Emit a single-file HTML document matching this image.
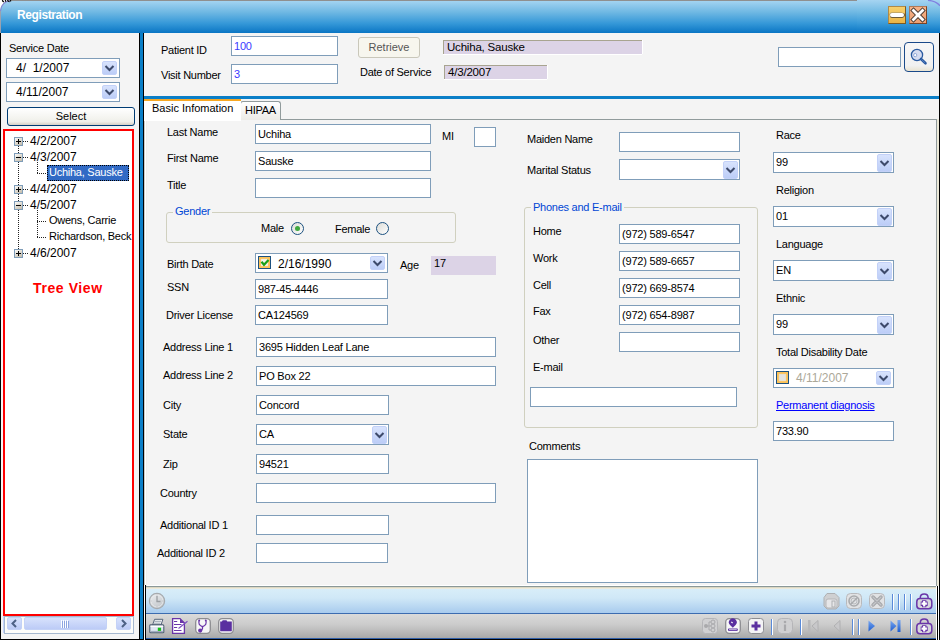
<!DOCTYPE html>
<html><head><meta charset="utf-8">
<style>
*{box-sizing:border-box}
html,body{margin:0;padding:0}
body{width:940px;height:640px;overflow:hidden;position:relative;background:#f4f4f4;font-family:"Liberation Sans",sans-serif;font-size:11px;color:#000}
.a{position:absolute}
.l{position:absolute;line-height:13px;white-space:nowrap;letter-spacing:-0.25px}
.tr{font-size:12px;letter-spacing:0;margin-top:1px}
.tb{position:absolute;background:#fff;border:1px solid #7f9db9;line-height:13px;padding:3px 0 0 2px;white-space:nowrap;overflow:hidden;height:20px;letter-spacing:-0.2px}
.ro{position:absolute;background:#dcd3e6;line-height:13px;padding:0 0 0 3px;white-space:nowrap;border-top:1px solid #a8a490;border-left:1px solid #a8a490;box-shadow:0 1px 0 #fff,1px 0 0 #fff;letter-spacing:-0.2px}
.dd{position:absolute;right:1px;top:1px;width:15px;height:17px;border:1px solid #c3d1f8;border-radius:2px;background:linear-gradient(#d8e3fd,#bccdf7)}
.dd svg{position:absolute;left:1px;top:5px}
.dp{font-size:12px;letter-spacing:0;padding-top:3px}
.dp .dd{top:2px;right:2px;height:14px}
.dp .dd svg{top:3px}
.grp{position:absolute;border:1px solid #d0d0bf;border-radius:3px}
.leg{position:absolute;line-height:13px;white-space:nowrap;color:#0046d5;background:#f4f4f4;padding:0 2px;letter-spacing:-0.25px}
</style></head><body>
<!-- title bar -->
<div class="a" style="left:0;top:0;width:940px;height:33px;background:#fff"></div>
<div class="a" style="left:0;top:0;width:857px;height:1px;background:#8f8f8f"></div>
<div class="a" style="left:0;top:1px;width:940px;height:32px;border-radius:9px 0 0 0;background:linear-gradient(#a3d3f1,#6fb8e3 35%,#3598d8 70%,#0a76c4)"></div>
<div class="a" style="left:857px;top:0;width:83px;height:33px;background:linear-gradient(#a6d4f1,#73bbe4 35%,#3a9bd9 70%,#0a76c4)"></div>
<svg class="a" style="left:926px;top:0" width="14" height="8"><path d="M2 0.3 Q10 0.8 14 5.8" fill="none" stroke="#8080e0" stroke-width="1.2"/></svg>
<svg class="a" style="left:0;top:0" width="12" height="12"><path d="M0 0 H11 Q1 1 0 11 Z" fill="#fff"/><path d="M11 0.5 Q1.5 1.5 0.5 11" fill="none" stroke="#8a8ad0" stroke-width="1.2"/></svg>
<div class="l" style="left:17px;top:9px;font-weight:bold;font-size:12px;letter-spacing:-0.4px;color:#fff">Registration</div><div class="a" style="left:0;top:11px;width:1px;height:22px;background:#9aa2b0"></div><svg class="a" style="left:0;top:0" width="12" height="4"><path d="M2.5 0 Q2.5 1.6 4 1.6 M5.5 0 V1.8 M7.5 0 Q8 1.6 9.5 1.6 M10.5 0 V1.5" fill="none" stroke="#111" stroke-width="1.3"/></svg>
<!-- min / close -->
<div class="a" style="left:888px;top:6px;width:18px;height:18px;background:linear-gradient(#f7d06c,#ebb445);border:1px solid #7c5a22;border-top-color:#b08a48;border-left-color:#b08a48"></div>
<div class="a" style="left:890px;top:13px;width:14px;height:4px;background:#fff;border-radius:2px;box-shadow:0 1px 0 #6b5a3a,1px 0 0 #6b5a3a,-0.5px -0.5px 0 #9a8a6a"></div>
<div class="a" style="left:909px;top:6px;width:18px;height:18px;background:linear-gradient(#f6b288,#eda072);border:1px solid #7a4428;border-top-color:#b07a58;border-left-color:#b07a58"></div>
<svg class="a" style="left:910px;top:7px" width="16" height="16" viewBox="0 0 16 16"><path d="M3.5 3.5 L12.5 12.5 M12.5 3.5 L3.5 12.5" stroke="#4a3a30" stroke-width="4.6" stroke-linecap="square"/><path d="M3.5 3.5 L12.5 12.5 M12.5 3.5 L3.5 12.5" stroke="#fff" stroke-width="2.8" stroke-linecap="square"/></svg>

<!-- borders -->
<div class="a" style="left:0;top:33px;width:1px;height:607px;background:#000"></div>
<div class="a" style="left:939px;top:33px;width:1px;height:607px;background:#000"></div>

<!-- left panel -->
<div class="l" style="left:9px;top:42px">Service Date</div>
<div class="tb dp" style="left:6px;top:58px;width:114px;padding-left:9px">4/&nbsp; 1/2007<div class="dd"><svg width="11" height="7"><path d="M1.5 1 L5.5 5 L9.5 1" fill="none" stroke="#3d4a6b" stroke-width="2"/></svg></div></div>
<div class="tb dp" style="left:6px;top:82px;width:114px;padding-left:9px">4/11/2007<div class="dd"><svg width="11" height="7"><path d="M1.5 1 L5.5 5 L9.5 1" fill="none" stroke="#3d4a6b" stroke-width="2"/></svg></div></div>
<div class="a" style="left:7px;top:107px;width:128px;height:19px;border:1px solid #003c74;border-radius:3px;background:linear-gradient(#fff,#f0f0ea 80%,#d6d0c5);text-align:center;line-height:16px">Select</div>

<!-- tree -->
<div class="a" style="left:3px;top:129px;width:131px;height:487px;border:2px solid #f00;background:#fff"></div>
<div class="l tr" style="left:30px;top:134px">4/2/2007</div>
<div class="l tr" style="left:30px;top:150px">4/3/2007</div>
<div class="a" style="left:47px;top:165px;width:82px;height:16px;background:#316ac5;border:1px dotted #000"></div>
<div class="l" style="left:49px;top:166px;color:#fff">Uchiha, Sauske</div>
<div class="l tr" style="left:30px;top:182px">4/4/2007</div>
<div class="l tr" style="left:30px;top:198px">4/5/2007</div>
<div class="l" style="left:49px;top:214px">Owens, Carrie</div>
<div class="l" style="left:49px;top:230px">Richardson, Beck</div>
<div class="l tr" style="left:30px;top:246px">4/6/2007</div>
<div class="l" style="left:33px;top:282px;font-weight:bold;font-size:14px;letter-spacing:0.6px;color:#f00">Tree View</div>

<!-- h scrollbar -->
<div class="a" style="left:3px;top:616px;width:131px;height:17px;background:#f3f1ec;border:1px solid #c3d3fd"></div>

<!-- separator -->
<div class="a" style="left:139px;top:33px;width:5px;height:607px;background:#0b7fc7;border-left:1px solid #000;border-right:1px solid #000"></div>
<div class="a" style="left:144px;top:96px;width:795px;height:3px;background:#0b7fc7"></div>

<!-- header -->
<div class="l" style="left:161px;top:44px">Patient ID</div>
<div class="l" style="left:161px;top:69px">Visit Number</div>
<div class="tb" style="left:231px;top:36px;width:107px;color:#3a3aff">100</div>
<div class="tb" style="left:231px;top:64px;width:107px;color:#3a3aff">3</div>
<div class="a" style="left:358px;top:37px;width:62px;height:21px;border:1px solid #c9c7ba;border-radius:3px;background:#f7f6ee;color:#555;text-align:center;line-height:19px">Retrieve</div>
<div class="ro" style="left:443px;top:40px;width:199px;height:14px;font-size:11.5px">Uchiha, Sauske</div>
<div class="l" style="left:360px;top:66px">Date of Service</div>
<div class="ro" style="left:444px;top:65px;width:103px;height:14px;font-size:11.5px">4/3/2007</div>
<div class="tb" style="left:778px;top:47px;width:123px"></div>
<div class="a" style="left:904px;top:42px;width:30px;height:30px;border:1.5px solid #1a4a8a;border-radius:4px;background:linear-gradient(#f7f7f7,#f1f1f1 80%,#e9e3d2)"></div>

<!-- tabs -->
<div class="a" style="left:144px;top:119px;width:793px;height:468px;border:1px solid #919b9c;border-left-color:#c8ccc8;border-bottom-color:#8a9898;background:#f4f4f4;box-shadow:inset 1px 0 0 #fff,inset 2px 0 0 #f0f0ec,inset 0 -1px 0 #fff"></div><div class="a" style="left:937px;top:119px;width:2px;height:468px;background:#ece9d8"></div>
<div class="a" style="left:240px;top:101px;width:41px;height:19px;border:1px solid #919b9c;border-bottom:none;border-radius:3px 3px 0 0;background:linear-gradient(#fff,#ecebe6)"></div>
<div class="l" style="left:245px;top:104px">HIPAA</div>
<div class="a" style="left:144px;top:99px;width:97px;height:22px;background:#fff;border-top:2px solid #f7a824"></div>
<div class="l" style="left:152px;top:102px;letter-spacing:0">Basic Infomation</div>

<!-- col 1 -->
<div class="l" style="left:167px;top:126px">Last Name</div>
<div class="tb" style="left:255px;top:124px;width:176px">Uchiha</div>
<div class="l" style="left:442px;top:130px">MI</div>
<div class="tb" style="left:474px;top:127px;width:22px"></div>
<div class="l" style="left:167px;top:152px">First Name</div>
<div class="tb" style="left:255px;top:151px;width:176px">Sauske</div>
<div class="l" style="left:167px;top:179px">Title</div>
<div class="tb" style="left:255px;top:178px;width:176px"></div>

<div class="grp" style="left:166px;top:212px;width:290px;height:31px"></div>
<div class="leg" style="left:173px;top:205px">Gender</div>
<div class="l" style="left:261px;top:222px">Male</div>
<div class="a" style="left:291px;top:222px;width:13px;height:13px;border-radius:50%;border:1px solid #1c5180;background:linear-gradient(135deg,#dcdcd7,#fff)"></div>
<div class="a" style="left:295px;top:226px;width:5px;height:5px;border-radius:50%;background:#3fa83f"></div>
<div class="l" style="left:335px;top:223px">Female</div>
<div class="a" style="left:376px;top:222px;width:13px;height:13px;border-radius:50%;border:1px solid #1c5180;background:linear-gradient(135deg,#dcdcd7,#fff)"></div>

<div class="l" style="left:167px;top:258px">Birth Date</div>
<div class="tb dp" style="left:255px;top:253px;width:133px;padding-left:22px;padding-top:4px">2/16/1990<div class="a" style="left:2px;top:2px;width:13px;height:13px;border:1px solid #1c5180;background:#f2f2ee;box-shadow:inset 0 0 1px 2px #fbc25a"></div><svg class="a" style="left:4px;top:4px" width="10" height="10"><path d="M1.5 3.8 L4 6.8 L8.5 2" fill="none" stroke="#18a018" stroke-width="2.2"/></svg><div class="dd"><svg width="11" height="7"><path d="M1.5 1 L5.5 5 L9.5 1" fill="none" stroke="#3d4a6b" stroke-width="2"/></svg></div></div>
<div class="l" style="left:400px;top:259px">Age</div>
<div class="a" style="left:431px;top:256px;width:65px;height:19px;padding:1px 0 0 3px;line-height:13px;background:#dcd3e6">17</div>
<div class="l" style="left:167px;top:281px">SSN</div>
<div class="tb" style="left:255px;top:279px;width:133px">987-45-4446</div>
<div class="l" style="left:166px;top:309px">Driver License</div>
<div class="tb" style="left:255px;top:305px;width:133px">CA124569</div>
<div class="l" style="left:163px;top:341px">Address Line 1</div>
<div class="tb" style="left:256px;top:337px;width:240px">3695 Hidden Leaf Lane</div>
<div class="l" style="left:163px;top:369px">Address Line 2</div>
<div class="tb" style="left:256px;top:366px;width:240px">PO Box 22</div>
<div class="l" style="left:163px;top:399px">City</div>
<div class="tb" style="left:256px;top:395px;width:133px">Concord</div>
<div class="l" style="left:163px;top:428px">State</div>
<div class="tb" style="left:256px;top:424px;width:133px;height:21px">CA<div class="dd" style="height:18px"><svg width="11" height="7"><path d="M1.5 1 L5.5 5 L9.5 1" fill="none" stroke="#3d4a6b" stroke-width="2"/></svg></div></div>
<div class="l" style="left:163px;top:458px">Zip</div>
<div class="tb" style="left:256px;top:454px;width:133px">94521</div>
<div class="l" style="left:160px;top:487px">Country</div>
<div class="tb" style="left:256px;top:483px;width:240px"></div>
<div class="l" style="left:160px;top:519px">Additional ID 1</div>
<div class="tb" style="left:256px;top:515px;width:133px"></div>
<div class="l" style="left:157px;top:547px">Additional ID 2</div>
<div class="tb" style="left:256px;top:543px;width:132px"></div>

<!-- col 2 -->
<div class="l" style="left:527px;top:133px">Maiden Name</div>
<div class="tb" style="left:619px;top:132px;width:121px"></div>
<div class="l" style="left:527px;top:164px">Marital Status</div>
<div class="tb" style="left:619px;top:159px;width:121px;height:21px"><div class="dd" style="height:18px"><svg width="11" height="7"><path d="M1.5 1 L5.5 5 L9.5 1" fill="none" stroke="#3d4a6b" stroke-width="2"/></svg></div></div>
<div class="grp" style="left:524px;top:207px;width:234px;height:221px"></div>
<div class="leg" style="left:531px;top:201px">Phones and E-mail</div>
<div class="l" style="left:533px;top:225px">Home</div>
<div class="tb" style="left:619px;top:224px;width:121px">(972) 589-6547</div>
<div class="l" style="left:533px;top:252px">Work</div>
<div class="tb" style="left:619px;top:251px;width:121px">(972) 589-6657</div>
<div class="l" style="left:533px;top:279px">Cell</div>
<div class="tb" style="left:619px;top:278px;width:121px">(972) 669-8574</div>
<div class="l" style="left:533px;top:305px">Fax</div>
<div class="tb" style="left:619px;top:305px;width:121px">(972) 654-8987</div>
<div class="l" style="left:533px;top:334px">Other</div>
<div class="tb" style="left:619px;top:332px;width:121px"></div>
<div class="l" style="left:533px;top:361px">E-mail</div>
<div class="tb" style="left:530px;top:387px;width:207px"></div>
<div class="l" style="left:529px;top:440px">Comments</div>
<div class="tb" style="left:527px;top:459px;width:231px;height:124px"></div>

<!-- col 3 -->
<div class="l" style="left:776px;top:129px">Race</div>
<div class="tb" style="left:773px;top:152px;width:121px;height:21px">99<div class="dd" style="height:18px"><svg width="11" height="7"><path d="M1.5 1 L5.5 5 L9.5 1" fill="none" stroke="#3d4a6b" stroke-width="2"/></svg></div></div>
<div class="l" style="left:776px;top:184px">Religion</div>
<div class="tb" style="left:773px;top:206px;width:121px;height:21px">01<div class="dd" style="height:18px"><svg width="11" height="7"><path d="M1.5 1 L5.5 5 L9.5 1" fill="none" stroke="#3d4a6b" stroke-width="2"/></svg></div></div>
<div class="l" style="left:776px;top:238px">Language</div>
<div class="tb" style="left:773px;top:260px;width:121px;height:21px">EN<div class="dd" style="height:18px"><svg width="11" height="7"><path d="M1.5 1 L5.5 5 L9.5 1" fill="none" stroke="#3d4a6b" stroke-width="2"/></svg></div></div>
<div class="l" style="left:776px;top:292px">Ethnic</div>
<div class="tb" style="left:773px;top:314px;width:121px;height:21px">99<div class="dd" style="height:18px"><svg width="11" height="7"><path d="M1.5 1 L5.5 5 L9.5 1" fill="none" stroke="#3d4a6b" stroke-width="2"/></svg></div></div>
<div class="l" style="left:776px;top:346px">Total Disability Date</div>
<div class="tb dp" style="left:773px;top:368px;width:121px;padding-left:22px;padding-top:3px;color:#aca899">4/11/2007<div class="a" style="left:2px;top:2px;width:13px;height:13px;border:1px solid #1c5180;background:#e4e4e0;box-shadow:inset 0 0 1px 2px #fbc25a"></div><div class="dd"><svg width="11" height="7"><path d="M1.5 1 L5.5 5 L9.5 1" fill="none" stroke="#3d4a6b" stroke-width="2"/></svg></div></div>
<div class="l" style="left:776px;top:399px;color:#0000ff;text-decoration:underline">Permanent diagnosis</div>
<div class="tb" style="left:773px;top:421px;width:121px">733.90</div>

<!-- status bar -->
<div class="a" style="left:144px;top:587px;width:793px;height:27px;background:linear-gradient(#d9eef9,#d0e8f7 40%,#a8cbee);border-top:1px solid #dcd8c4;box-shadow:inset 0 1px 0 #eceadb;border-bottom:1px solid #3c6cb0"></div>
<!-- toolbar -->
<div class="a" style="left:144px;top:614px;width:793px;height:25px;background:linear-gradient(#dadada,#cbcbcb 45%,#a9a9a9);border-bottom:1px solid #2f5ea8"></div><div class="a" style="left:0;top:639px;width:940px;height:1px;background:#000"></div><div class="a" style="left:936px;top:586px;width:1px;height:54px;background:#fff"></div><div class="a" style="left:937px;top:586px;width:1px;height:54px;background:#000"></div><div class="a" style="left:938px;top:586px;width:1px;height:54px;background:#fff"></div>


<!-- tree decorations -->
<svg class="a" style="left:5px;top:131px" width="125" height="130">
<g fill="none" stroke="#222" stroke-width="1" stroke-dasharray="1 1">
<path d="M13.5 15 V118"/>
<path d="M18 10.5 H23 M18 26.5 H23 M18 58.5 H23 M18 74.5 H23 M18 122.5 H23"/>
<path d="M32.5 31 V42"/><path d="M32 42.5 H42"/>
<path d="M32.5 79 V106"/><path d="M32 90.5 H42"/><path d="M32 106.5 H42"/>
</g>
</svg>
<svg class="a" style="left:14px;top:137px" width="10" height="130">
<defs><linearGradient id="eg" x1="0" y1="0" x2="0.7" y2="1"><stop offset="0" stop-color="#fff"/><stop offset="1" stop-color="#c6bfae"/></linearGradient></defs>
<g stroke="#7f9db9" fill="url(#eg)"><rect x="0.5" y="0.5" width="8" height="8"/><rect x="0.5" y="16.5" width="8" height="8"/><rect x="0.5" y="48.5" width="8" height="8"/><rect x="0.5" y="64.5" width="8" height="8"/><rect x="0.5" y="112.5" width="8" height="8"/></g>
<g stroke="#000" stroke-width="1"><path d="M2 4.5 H7 M4.5 2 V7"/><path d="M2 20.5 H7"/><path d="M2 52.5 H7 M4.5 50 V55"/><path d="M2 68.5 H7"/><path d="M2 116.5 H7 M4.5 114 V119"/></g>
</svg>

<!-- h scrollbar parts -->
<div class="a" style="left:4px;top:616px;width:130px;height:18px;background:#fdfdfa;border:1px solid #a6b8cf"></div>
<div class="a" style="left:7px;top:617px;width:15px;height:13px;border-radius:2px;background:linear-gradient(#d8e2fc,#bccbf6);border:1px solid #c4d2f6"></div>
<svg class="a" style="left:10px;top:619px" width="8" height="9"><path d="M6 1 L2.5 4.5 L6 8" fill="none" stroke="#4d6185" stroke-width="2"/></svg>
<div class="a" style="left:24px;top:617px;width:83px;height:13px;border-radius:2px;background:linear-gradient(#d8e2fc,#bccbf6);border:1px solid #c4d2f6"></div>
<svg class="a" style="left:60px;top:620px" width="9" height="8"><path d="M1.5 0 V8 M3.5 0 V8 M5.5 0 V8 M7.5 0 V8" stroke="#fff" stroke-width="1"/><path d="M2.5 1 V8 M4.5 1 V8 M6.5 1 V8 M8.5 1 V8" stroke="#8da5e0" stroke-width="1"/></svg>
<div class="a" style="left:116px;top:617px;width:15px;height:13px;border-radius:2px;background:linear-gradient(#d8e2fc,#bccbf6);border:1px solid #c4d2f6"></div>
<svg class="a" style="left:120px;top:619px" width="8" height="9"><path d="M2 1 L5.5 4.5 L2 8" fill="none" stroke="#4d6185" stroke-width="2"/></svg>
<div class="a" style="left:1px;top:639px;width:139px;height:1px;background:#000"></div>

<!-- search icon -->
<svg class="a" style="left:904px;top:42px" width="31" height="30"><circle cx="13" cy="13" r="5.6" fill="#d6dcf0" stroke="#2a5aa0" stroke-width="1.3"/><circle cx="11.2" cy="13.1" r="1.6" fill="#fff" stroke="#7f9ad0" stroke-width="0.8"/><path d="M17 17 L21.5 21.3" stroke="#2a5aa0" stroke-width="2.6" stroke-linecap="round"/><path d="M17.5 17.5 L21 20.8" stroke="#5f86c8" stroke-width="0.8"/></svg>

<!-- bottom-left black line -->
<div class="a" style="left:144px;top:585px;width:1px;height:55px;background:#fff"></div>
<div class="a" style="left:145px;top:585px;width:1px;height:55px;background:#000"></div>

<!-- status bar icons -->
<svg class="a" style="left:148px;top:592px" width="18" height="18"><defs><linearGradient id="cg" x1="0" y1="0" x2="0.6" y2="1"><stop offset="0" stop-color="#eef0f2"/><stop offset="1" stop-color="#c4c8cc"/></linearGradient></defs><circle cx="9" cy="9" r="7.6" fill="url(#cg)" stroke="#a6aaae" stroke-width="1.2"/><circle cx="9" cy="9" r="6" fill="none" stroke="#e8eaec" stroke-width="0.8"/><path d="M9 4 V9.5 H12.5" fill="none" stroke="#9a9ea2" stroke-width="1.3"/><path d="M9 2.6 V3.4 M9 14.6 V15.4 M2.6 9 H3.4 M14.6 9 H15.4" stroke="#a0a4a8" stroke-width="0.9"/></svg>
<svg class="a" style="left:823px;top:593px" width="17" height="17"><path d="M4 0.5 H12 L16 4.5 V13 L13 16 H4 L1 13 V4.5 Z" fill="#cfd0d2" stroke="#aeb0b3"/><rect x="3" y="6" width="11" height="9" rx="2" fill="#e6e6e8" stroke="#b5b6b9"/><rect x="9" y="8" width="3" height="6" fill="none" stroke="#aeb0b3"/></svg>
<svg class="a" style="left:846px;top:593px" width="17" height="17"><rect x="0.5" y="0.5" width="15" height="15" rx="4" fill="#e1e2e4" stroke="#b8b9bc"/><circle cx="8" cy="8" r="5" fill="none" stroke="#a9abae" stroke-width="1.6"/><circle cx="8" cy="8" r="3" fill="none" stroke="#b9bbbe" stroke-width="1"/><path d="M5 11 L11 5" stroke="#a9abae" stroke-width="1.5"/></svg>
<svg class="a" style="left:869px;top:593px" width="17" height="17"><rect x="0.5" y="0.5" width="15" height="15" rx="4" fill="#e1e2e4" stroke="#b8b9bc"/><path d="M4 4 L12 12 M12 4 L4 12" stroke="#a4a6a9" stroke-width="3.4" stroke-linecap="round"/><path d="M4 4 L12 12 M12 4 L4 12" stroke="#c4c6c9" stroke-width="1.2" stroke-linecap="round"/></svg>
<svg class="a" style="left:892px;top:594px" width="20" height="16"><path d="M0.5 0 V16 M6.5 0 V16 M12.5 0 V16 M18.5 0 V16" stroke="#5a8ad8"/><path d="M1.5 0 V16 M7.5 0 V16 M13.5 0 V16 M19.5 0 V16" stroke="#fff"/></svg>
<svg class="a" style="left:916px;top:593px" width="17" height="17"><path d="M4.3 6 V4.6 Q4.3 0.9 8.2 0.9 Q12.1 0.9 12.1 4.6 V6" fill="none" stroke="#6a35a8" stroke-width="1.5"/><rect x="0.8" y="5.6" width="15" height="10.2" rx="3.2" fill="#d6d6dc" stroke="#6a35a8" stroke-width="1.5"/><path d="M8.2 7.2 V14.2 M4.7 10.7 H11.7" stroke="#6a35a8" stroke-width="4.4"/><path d="M8.2 8 V13.4 M5.5 10.7 H10.9" stroke="#fff" stroke-width="2.2"/></svg>

<!-- toolbar icons left -->
<svg class="a" style="left:146px;top:614px" width="24" height="24"><path d="M8.6 5.3 H16.9 L15 10.9 H6.6 Z" fill="#f4f6f8" stroke="#56657a" stroke-width="1"/><path d="M8.5 7.3 H15 M7.8 9.2 H14.5" stroke="#8e9aa8" stroke-width="0.9"/><path d="M3.8 11.5 Q3.8 10.9 4.8 10.9 H16.8 Q17.8 10.9 17.8 11.9 V18.2 Q17.8 18.7 16.8 18.7 H4.8 Q3.8 18.7 3.8 18 Z" fill="#dfe6f2" stroke="#4e5d72" stroke-width="1.1"/><path d="M4.5 12.3 H17.2" stroke="#fff" stroke-width="1.3"/><path d="M4.5 17.4 H17.2" stroke="#9aa6ba" stroke-width="1"/><rect x="11.8" y="13.7" width="3.3" height="3.2" fill="#16c016"/></svg>
<svg class="a" style="left:168px;top:614px" width="24" height="24"><path d="M4.6 4.6 H12 L16.4 9 V19.4 H4.6 Z" fill="#fff" stroke="#6a35a8" stroke-width="1.3"/><path d="M12 4.6 L16.4 9 H12 Z" fill="#6a35a8"/><path d="M6 7.5 H9.2 M6 10.5 H13.5 M6 13.5 H9.2 M6 16.5 H13.5" stroke="#6a35a8" stroke-width="1.1"/><path d="M10.5 14.5 L19.5 7.3" stroke="#7b4cc0" stroke-width="1.1"/></svg>
<svg class="a" style="left:195px;top:618px" width="16" height="16"><rect x="0.7" y="0.7" width="14.6" height="14.6" rx="3.5" fill="#f7f7f8" stroke="#8c8c90" stroke-width="1.3"/><path d="M4.2 2.2 Q2.6 7 7.5 8.6 Q12.4 7 10.8 2.2" fill="none" stroke="#6a35a8" stroke-width="1.3"/><circle cx="4.3" cy="2.3" r="0.9" fill="#6a35a8"/><circle cx="10.7" cy="2.3" r="0.9" fill="#6a35a8"/><path d="M7.5 8.6 V10.5 Q7.3 12 6 12.3" fill="none" stroke="#6a35a8" stroke-width="1.3"/><circle cx="5.2" cy="12.6" r="2.1" fill="#6a35a8"/></svg>
<svg class="a" style="left:218px;top:618px" width="16" height="16"><rect x="0.7" y="0.7" width="14.6" height="14.6" rx="3.5" fill="#f7f7f8" stroke="#8c8c90" stroke-width="1.3"/><path d="M2.2 3.5 H4 Q4.2 2.3 5.2 2.3 H8 Q9 2.3 9.2 3.5 H13.8 V13.2 H2.2 Z" fill="#5a2fa0"/></svg>

<!-- toolbar icons right -->
<svg class="a" style="left:702px;top:618px" width="16" height="16"><rect x="0.5" y="0.5" width="15" height="15" rx="3" fill="#d0d0d2" stroke="#b5b5b8"/><circle cx="4" cy="8" r="2" fill="#a9a9ac"/><circle cx="11" cy="4" r="2" fill="none" stroke="#a9a9ac"/><circle cx="11" cy="8" r="2" fill="none" stroke="#a9a9ac"/><circle cx="11" cy="12" r="2" fill="none" stroke="#a9a9ac"/><path d="M4 8 H9 M7 4 V12 H9 M7 4 H9" fill="none" stroke="#a9a9ac"/></svg>
<svg class="a" style="left:725px;top:618px" width="16" height="16"><rect x="0.7" y="0.7" width="14.6" height="14.6" rx="3.5" fill="#f7f7f8" stroke="#8c8c90" stroke-width="1.3"/><path d="M7.8 9.8 L5 7 A3.9 3.9 0 1 1 10.6 7 Z" fill="#5a2fa0"/><path d="M6.3 3.8 L7.6 5" stroke="#fff" stroke-width="1.1"/><rect x="3" y="10.5" width="9.8" height="2.4" rx="0.8" fill="#5a2fa0"/><path d="M4 11.7 H11.8" stroke="#fff" stroke-width="0.7"/></svg>
<svg class="a" style="left:748px;top:618px" width="16" height="16"><rect x="0.5" y="0.5" width="15" height="15" rx="3" fill="#f3f3f5" stroke="#8d8d92"/><path d="M8 3.5 V12.5 M3.5 8 H12.5" stroke="#5a2fa0" stroke-width="3"/></svg>
<svg class="a" style="left:771px;top:619px" width="2" height="16"><path d="M0.5 0 V16" stroke="#5a8ad8"/><path d="M1.5 0 V16" stroke="#fff"/></svg>
<svg class="a" style="left:777px;top:618px" width="16" height="16"><rect x="0.5" y="0.5" width="15" height="15" rx="4" fill="#d0d0d2" stroke="#b5b5b8"/><circle cx="8" cy="4" r="1.3" fill="#a9a9ac"/><path d="M8 6.5 V13" stroke="#a9a9ac" stroke-width="2.2"/></svg>
<svg class="a" style="left:800px;top:619px" width="2" height="16"><path d="M0.5 0 V16" stroke="#5a8ad8"/><path d="M1.5 0 V16" stroke="#fff"/></svg>
<svg class="a" style="left:808px;top:620px" width="11" height="12"><rect x="0" y="0" width="2.5" height="12" fill="#b8b8ba"/><path d="M10 0.5 L4 6 L10 11.5 Z" fill="#c8c8ca" stroke="#b0b0b2"/></svg>
<svg class="a" style="left:833px;top:620px" width="8" height="12"><path d="M7 0.5 L1 6 L7 11.5 Z" fill="#c8c8ca" stroke="#b0b0b2"/></svg>
<svg class="a" style="left:852px;top:619px" width="8" height="16"><path d="M0.5 0 V16 M6.5 0 V16" stroke="#5a8ad8"/><path d="M1.5 0 V16 M7.5 0 V16" stroke="#fff"/></svg>
<svg class="a" style="left:868px;top:620px" width="8" height="12"><defs><linearGradient id="bl" x1="0" y1="0" x2="0" y2="1"><stop offset="0" stop-color="#7aa8f0"/><stop offset="1" stop-color="#1c5cd0"/></linearGradient></defs><path d="M0.5 0.5 L7 6 L0.5 11.5 Z" fill="url(#bl)"/></svg>
<svg class="a" style="left:890px;top:620px" width="11" height="12"><path d="M0.5 0.5 L6.5 6 L0.5 11.5 Z" fill="url(#bl)"/><rect x="7.5" y="0" width="3" height="12" fill="url(#bl)"/></svg>
<svg class="a" style="left:910px;top:619px" width="2" height="16"><path d="M0.5 0 V16" stroke="#5a8ad8"/><path d="M1.5 0 V16" stroke="#fff"/></svg>
<svg class="a" style="left:916px;top:618px" width="17" height="17"><path d="M4.3 6 V4.6 Q4.3 0.9 8.2 0.9 Q12.1 0.9 12.1 4.6 V6" fill="none" stroke="#6a35a8" stroke-width="1.5"/><rect x="0.8" y="5.6" width="15" height="10.2" rx="3.2" fill="#d6d6dc" stroke="#6a35a8" stroke-width="1.5"/><path d="M8.2 7.2 V14.2 M4.7 10.7 H11.7" stroke="#6a35a8" stroke-width="4.4"/><path d="M8.2 8 V13.4 M5.5 10.7 H10.9" stroke="#fff" stroke-width="2.2"/></svg>
</body></html>
